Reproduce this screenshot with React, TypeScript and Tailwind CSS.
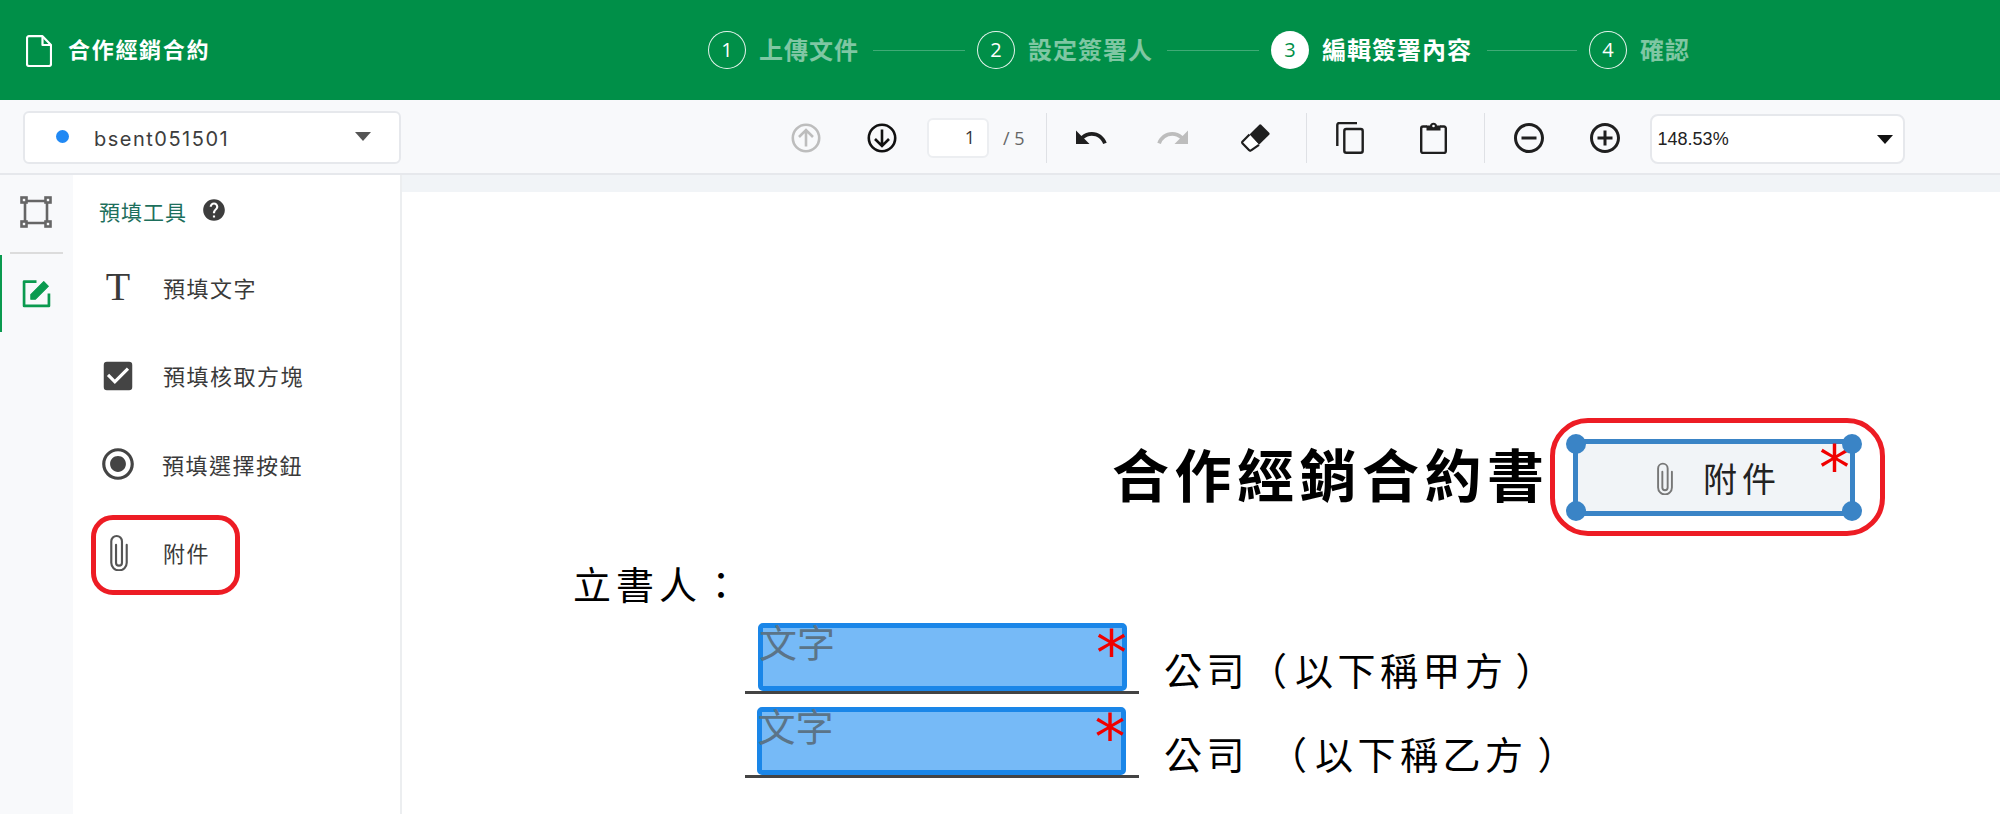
import { MdUndo, MdRedo, MdOutlineRemoveCircleOutline, MdOutlineAddCircleOutline, MdHelp, MdCheckBox, MdRadioButtonChecked } from 'react-icons/md'

const cjk = { fontFamily: '"Noto Sans CJK TC", sans-serif' }
const star = { fontFamily: '"DejaVu Sans", sans-serif' }

const steps = [
  { n: 1, label: '上傳文件', textW: 'w-[102px]', lineW: 'w-[92px]' },
  { n: 2, label: '設定簽署人', textW: 'w-[127px]', lineW: 'w-[92px]' },
  { n: 3, label: '編輯簽署內容', textW: 'w-[153px]', lineW: 'w-[90px]', active: true },
  { n: 4, label: '確認', textW: 'w-[50px]' },
]

function Paperclip({ className }: { className?: string }) {
  return (
    <svg viewBox="0 0 18 32" fill="none" stroke="currentColor" strokeWidth="1.8" strokeLinecap="round" className={className}>
      <path d="M6.5 9v15a2.5 2.5 0 0 0 5 0V6a4.5 4.5 0 0 0-9 0v18a6.5 6.5 0 0 0 13 0V9" transform="translate(0 1)" />
    </svg>
  )
}

function ArrowCircle({ down, className }: { down?: boolean; className: string }) {
  return (
    <svg viewBox="0 0 30 30" fill="none" stroke="currentColor" strokeWidth="2.6" className={`h-[30px] w-[30px] ${className}`}>
      <circle cx="15" cy="15" r="13.2" />
      <path d={down ? 'M15 6.5v16.5M8 16l7 7 7-7' : 'M15 23.5V7M8 14l7-7 7 7'} />
    </svg>
  )
}

function Copy() {
  return (
    <svg viewBox="0 0 28 32" className="h-[32px] w-[28px]" fill="none" stroke="#1f1f1f" strokeWidth="2.4">
      <path d="M1.3 24V3a2 2 0 0 1 2-2H21" />
      <rect x="8.3" y="7" width="18.4" height="23.8" rx="2" />
    </svg>
  )
}

function Clipboard() {
  return (
    <svg viewBox="0 0 27 32" className="h-[32px] w-[27px]">
      <path d="M7 4.5H3a1.8 1.8 0 0 0-1.8 1.8v23a1.6 1.6 0 0 0 1.6 1.6h21.4a1.6 1.6 0 0 0 1.6-1.6v-23a1.8 1.8 0 0 0-1.8-1.8H20" fill="none" stroke="#1f1f1f" strokeWidth="2.4" />
      <path d="M6.5 8.5V3.5H10a3.6 3.6 0 0 1 7 0h3.5v5z" fill="#1f1f1f" />
      <circle cx="13.5" cy="4" r="1.3" fill="#f8f9fb" />
    </svg>
  )
}

function Eraser() {
  return (
    <svg viewBox="0 0 29 28" className="h-[28px] w-[29px]">
      <path d="M18.3.8a1.4 1.4 0 0 1 1.9 0l8 8a1.4 1.4 0 0 1 0 1.9L18 20.8 8.5 10.5z" fill="#1f1f1f" />
      <path d="M8.5 10.5 1.6 17.6a1.4 1.4 0 0 0 0 1.9l6.6 6.8a1.4 1.4 0 0 0 1.9 0L18 20.8" fill="#fff" stroke="#1f1f1f" strokeWidth="2.2" strokeLinejoin="round" />
    </svg>
  )
}

function Divider() {
  return <div className="h-[50px] w-px bg-[#dfe1e5]" />
}

function Field({ className }: { className: string }) {
  return (
    <div className={`relative h-[68px] w-[369px] rounded-[5px] border-[5px] border-[#1a86e8] bg-[#76baf7] ${className}`}>
      <span className="absolute left-[-4px] top-[-10px] text-[38px] leading-[46px] text-[#5b7488]" style={cjk}>文字</span>
      <span className="absolute right-[-5px] top-[-9px] text-[62px] leading-[70px] text-[#f00000]" style={star}>*</span>
    </div>
  )
}

function Handle({ className }: { className: string }) {
  return <span className={`absolute h-[20px] w-[20px] rounded-full bg-[#3a84c6] ${className}`} />
}

export default function App() {
  return (
    <div className="flex h-[814px] w-[2000px] flex-col overflow-hidden bg-white" style={cjk}>
      <header className="flex h-[100px] shrink-0 items-center bg-[#008f48] text-white">
        <svg viewBox="0 0 26 32" fill="none" stroke="#fff" strokeWidth="2.2" strokeLinejoin="round" className="ml-[26px] mt-[2px] h-[32px] w-[26px]">
          <path d="M3 1.2h13.5L25 10v19a2 2 0 0 1-2 2H3a2 2 0 0 1-2-2V3.2a2 2 0 0 1 2-2z" />
          <path d="M16.5 1.2V10H25" />
        </svg>
        <span className="ml-[16px] mt-[-3px] w-[142px] whitespace-nowrap text-[22px] font-bold tracking-[1.7px]">合作經銷合約</span>
        <ol className="ml-[498px] flex items-center">
          {steps.map((s) => (
            <li key={s.n} className="flex items-center">
              <span
                className={`flex h-[38px] w-[38px] items-center justify-center rounded-full text-[20px] ${s.active ? 'bg-white text-[#008f48]' : 'border-[1.5px] border-white/90 bg-[#008f48] text-white'}`}
                style={{ fontFamily: '"Open Sans", sans-serif' }}
              >
                {s.n}
              </span>
              <span className={`ml-[13px] mt-[-3px] whitespace-nowrap text-[24px] font-bold leading-none tracking-[1px] ${s.textW} ${s.active ? 'text-white' : 'text-white/50'}`}>{s.label}</span>
              {s.lineW && <span className={`ml-[12px] mr-[12px] h-px bg-white/25 ${s.lineW}`} />}
            </li>
          ))}
        </ol>
      </header>

      <div className="flex h-[75px] shrink-0 items-center border-b-2 border-[#e6e8ec] bg-[#f8f9fb] pt-[2px]">
        <div className="ml-[23px] flex h-[53px] w-[378px] items-center rounded-[6px] border-2 border-[#e6e8ec] bg-white">
          <span className="ml-[31px] mt-[-2px] h-[13px] w-[13px] rounded-full bg-[#2189f4]" />
          <span className="ml-[25px] mt-[3px] text-[20px] tracking-[1.5px] text-[#3d3d3d]" style={{ fontFamily: 'Inter, sans-serif' }}>bsent051501</span>
          <span className="ml-auto mr-[28px] mt-[-2px] h-0 w-0 border-x-[8px] border-t-[9px] border-x-transparent border-t-[#555]" />
        </div>
        <ArrowCircle className="ml-[390px] text-[#bdbdbd]" />
        <ArrowCircle down className="ml-[46px] text-[#111]" />
        <div className="ml-[30px] flex h-[40px] w-[62px] items-center justify-end rounded-[6px] border-2 border-[#eceef1] bg-white pr-[12px] text-[18px] text-[#333]" style={{ fontFamily: '"Open Sans", sans-serif' }}>1</div>
        <span className="ml-[14px] mt-[1px] whitespace-nowrap text-[18px] text-[#666]" style={{ fontFamily: '"Open Sans", sans-serif' }}>/ 5</span>
        <div className="ml-[21px]"><Divider /></div>
        <MdUndo className="ml-[26px] text-[36px] text-[#1f1f1f]" />
        <MdRedo className="ml-[46px] text-[36px] text-[#bdbdbd]" />
        <div className="ml-[50px]"><Eraser /></div>
        <div className="ml-[36px]"><Divider /></div>
        <div className="ml-[29px]"><Copy /></div>
        <div className="ml-[56px]"><Clipboard /></div>
        <div className="ml-[37px]"><Divider /></div>
        <MdOutlineRemoveCircleOutline className="ml-[26px] text-[36px] text-[#1f1f1f]" />
        <MdOutlineAddCircleOutline className="ml-[40px] text-[36px] text-[#1f1f1f]" />
        <div className="ml-[27px] mt-[3px] flex h-[50px] w-[255px] items-center rounded-[8px] border-2 border-[#e6e8ec] bg-white">
          <span className="ml-[6px] text-[18px] text-[#222]" style={{ fontFamily: '"Liberation Sans", sans-serif' }}>148.53%</span>
          <span className="ml-auto mr-[10px] h-0 w-0 border-x-[8px] border-t-[9px] border-x-transparent border-t-[#111]" />
        </div>
      </div>

      <div className="flex min-h-0 flex-1">
        <aside className="flex w-[73px] shrink-0 flex-col bg-[#f8f9fb]">
          <div className="flex h-[77px] flex-col items-center justify-center">
            <svg viewBox="0 0 32 32" className="ml-[-2px] mt-[-3px] h-[32px] w-[32px]" fill="none" stroke="#666" strokeWidth="2.6">
              <path d="M5 7v18M7 5h18M27 7v18M7 27h18" />
              <rect x="1.5" y="1.5" width="5" height="5" />
              <rect x="25.5" y="1.5" width="5" height="5" />
              <rect x="1.5" y="25.5" width="5" height="5" />
              <rect x="25.5" y="25.5" width="5" height="5" />
            </svg>
          </div>
          <div className="mx-[10px] h-[2px] bg-[#dcdcdc]" />
          <div className="relative mt-[1px] flex h-[77px] items-center justify-center">
            <span className="absolute left-0 top-0 h-full w-[2px] bg-[#0a9a4f]" />
            <svg viewBox="0 0 28 28" className="ml-[-1px] h-[29px] w-[29px]" fill="none" stroke="#0a9a4f" strokeWidth="2.6" strokeLinejoin="round">
              <path d="M14 2.5H2v23.5h24V14" />
              <path d="M8.5 19.5V15L21 2.5l4.5 4.5L13 19.5z" fill="#0a9a4f" strokeWidth="1" />
            </svg>
          </div>
        </aside>

        <nav className="w-[329px] shrink-0 border-r-2 border-[#eceef0] bg-white">
          <div className="ml-[26px] mt-[24px] flex h-[24px] items-center">
            <span className="text-[21px] leading-none tracking-[1px] text-[#1d6f5c]">預填工具</span>
            <MdHelp className="ml-[14px] mt-[-2px] text-[26px] text-[#3d3d3d]" />
          </div>
          <ul className="mt-[20px] text-[#3a3a3a]">
            <li className="flex h-[88px] items-center">
              <span className="ml-[30px] w-[30px] text-center text-[40px] leading-none" style={{ fontFamily: '"Liberation Serif", serif' }}>T</span>
              <span className="ml-[30px] text-[22px] tracking-[1.5px]">預填文字</span>
            </li>
            <li className="flex h-[89px] items-center">
              <MdCheckBox className="ml-[26px] text-[38px] text-[#444]" />
              <span className="ml-[26px] whitespace-nowrap text-[22px] tracking-[1.5px]">預填核取方塊</span>
            </li>
            <li className="flex h-[88px] items-center">
              <MdRadioButtonChecked className="ml-[26px] text-[38px] text-[#444]" />
              <span className="ml-[25px] whitespace-nowrap text-[22px] tracking-[1.5px]">預填選擇按鈕</span>
            </li>
            <li className="relative flex h-[88px] items-center">
              <span className="absolute left-[18px] top-[7px] h-[80px] w-[149px] rounded-[22px] border-[5px] border-[#ed1c24]" />
              <Paperclip className="ml-[35px] h-[38px] w-[22px] text-[#555]" />
              <span className="ml-[33px] text-[22px] tracking-[1.5px]">附件</span>
            </li>
          </ul>
        </nav>

        <main className="flex min-w-0 flex-1 flex-col">
          <div className="h-[17px] bg-[#f1f4f7]" />
          <section className="relative flex-1 bg-white">
            <h1 className="absolute left-[710px] top-[242px] whitespace-nowrap text-[57px] font-bold leading-[76px] tracking-[5.5px] text-black">合作經銷合約書</h1>

            <div className="absolute left-[1148px] top-[226px] h-[118px] w-[335px] rounded-[38px] border-[5px] border-[#ed1c24]" />
            <div className="absolute left-[1171px] top-[247px] flex h-[77px] w-[282px] items-center justify-center border-[5px] border-[#3a84c6] bg-[#f1f4f7] pl-[8px]">
              <Paperclip className="h-[34px] w-[20px] text-[#777]" />
              <span className="ml-[28px] text-[34px] tracking-[5px] text-[#222]">附件</span>
              <span className="absolute right-[0px] top-[-10px] text-[62px] leading-[70px] text-[#f00000]" style={star}>*</span>
              <Handle className="left-[-12px] top-[-10px]" />
              <Handle className="right-[-12px] top-[-10px]" />
              <Handle className="bottom-[-10px] left-[-12px]" />
              <Handle className="bottom-[-10px] right-[-12px]" />
            </div>

            <p className="absolute left-[171px] top-[364px] text-[38px] leading-[54px] tracking-[5px] text-black">立書人：</p>

            <div className="absolute left-[343px] top-[431px] flex w-[900px] flex-col">
              <div className="flex items-end">
                <div className="flex w-[394px] flex-col items-center border-b-[3px] border-[#444]">
                  <Field className="ml-[1px]" />
                </div>
                <span className="ml-[25px] mb-[-2px] whitespace-nowrap text-[38px] leading-[54px] tracking-[4.5px] text-black">公司<span className="tracking-[8px]">（</span>以下稱甲方<span className="ml-[8px]">）</span></span>
              </div>
              <div className="mt-[13px] flex items-end">
                <div className="flex w-[394px] flex-col items-center border-b-[3px] border-[#444]">
                  <Field className="ml-[-2px]" />
                </div>
                <span className="ml-[25px] mb-[-2px] whitespace-nowrap text-[38px] leading-[54px] tracking-[4.5px] text-black">公司 <span className="ml-[7px] tracking-[8px]">（</span>以下稱乙方<span className="ml-[10px]">）</span></span>
              </div>
            </div>
          </section>
        </main>
      </div>
    </div>
  )
}
